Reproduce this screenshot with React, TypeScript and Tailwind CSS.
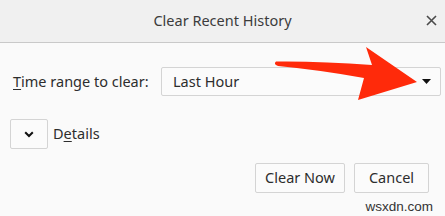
import React from 'react';

const font = { fontFamily: '"Noto Sans", "Open Sans", sans-serif' };

const App = () => {
  return (
    <div className="relative w-[445px] h-[216px] overflow-hidden bg-[#fafafa] text-[#2d2d2d]" style={font}>
      {/* Title bar */}
      <div className="relative h-[43px] bg-[#f0f0f0] border-b border-[#c9c9c9] flex items-center justify-center">
        <span className="text-[14.5px] text-[#3c3c3c] -mt-[1px]">Clear Recent History</span>
        <button className="absolute right-[6px] top-[12px] w-[16px] h-[16px] flex items-center justify-center">
          <svg width="11" height="11" viewBox="0 0 11 11">
            <path d="M1 1 L10 10 M10 1 L1 10" stroke="#4a4a4a" strokeWidth="1.6" />
          </svg>
        </button>
      </div>

      {/* Time range */}
      <div className="flex items-center mt-[24px] pl-[13px] pr-[4px]">
        <label className="text-[14.5px] w-[148px]">
          <span className="underline underline-offset-2">T</span>ime range to clear:
        </label>
        <div className="flex-1 h-[29px] border border-[#d4d4d4] rounded-[2px] bg-[#fbfbfb] flex items-center justify-between pl-[11px] pr-[9px]">
          <span className="text-[14.5px]">Last Hour</span>
          <svg width="9" height="5" viewBox="0 0 9 5">
            <path d="M0 0 H9 L4.5 5 Z" fill="#111" />
          </svg>
        </div>
      </div>

      {/* Details */}
      <div className="flex items-center mt-[23px] pl-[10px]">
        <button className="w-[38px] h-[30px] border border-[#d4d4d4] rounded-[2px] bg-[#fbfbfb] flex items-center justify-center">
          <svg width="10" height="7" viewBox="0 0 10 7">
            <path d="M1.2 1.2 L5 5 L8.8 1.2" stroke="#111" strokeWidth="2" fill="none" />
          </svg>
        </button>
        <span className="ml-[5px] text-[14.5px]">
          D<span className="underline underline-offset-2">e</span>tails
        </span>
      </div>

      {/* Action buttons */}
      <div className="flex justify-end gap-[9px] mt-[14px] pr-[16px]">
        <button className="w-[90px] h-[30px] border border-[#d4d4d4] rounded-[2px] bg-[#fbfbfb] text-[14.5px]">
          Clear Now
        </button>
        <button className="w-[75px] h-[30px] border border-[#d4d4d4] rounded-[2px] bg-[#fbfbfb] text-[14.5px]">
          Cancel
        </button>
      </div>

      <div className="flex justify-end pr-[12px] mt-[7px]">
        <span className="text-[13.5px] text-[#333] leading-none" style={{ fontFamily: '"Liberation Sans", Arial, sans-serif' }}>
          wsxdn.com
        </span>
      </div>

      {/* Red annotation arrow */}
      <svg className="absolute left-0 top-0 pointer-events-none" width="445" height="216" viewBox="0 0 445 216">
        <path
          d="M276 61.5 Q 320 61 372 65 L366 47 L417 82 L358 100 L364 78 Q 320 70 278 66 Q 273 64 276 61.5 Z"
          fill="#ff2a0a"
        />
      </svg>
    </div>
  );
};

export default App;
